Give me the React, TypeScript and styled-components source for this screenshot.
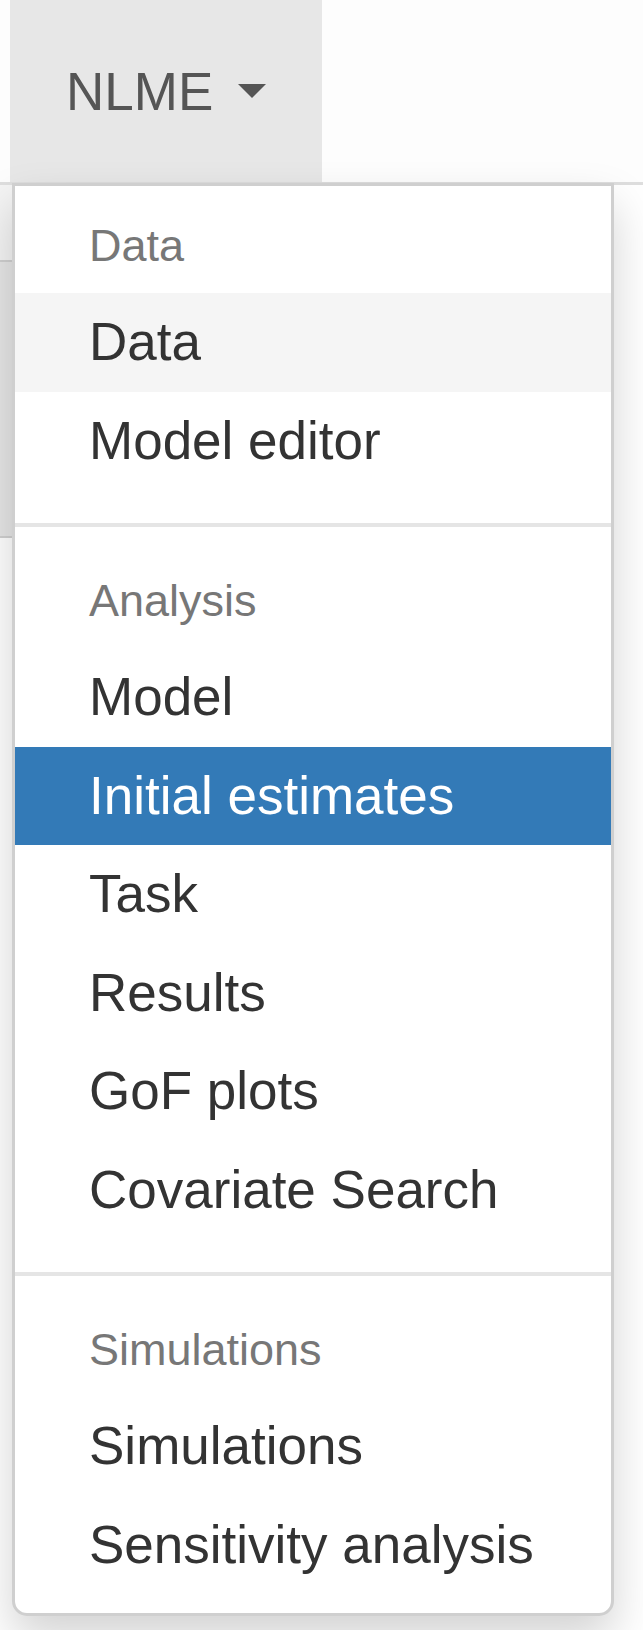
import styled, { createGlobalStyle } from "styled-components";

const GlobalStyle = createGlobalStyle`
  html, body {
    margin: 0;
    padding: 0;
    background: #ffffff;
    font-family: "Liberation Sans", Arial, Helvetica, sans-serif;
  }
`;

type Entry =
  | { kind: "header"; label: string }
  | { kind: "divider" }
  | { kind: "item"; label: string; state?: "hover" | "active" };

const entries: Entry[] = [
  { kind: "header", label: "Data" },
  { kind: "item", label: "Data", state: "hover" },
  { kind: "item", label: "Model editor" },
  { kind: "divider" },
  { kind: "header", label: "Analysis" },
  { kind: "item", label: "Model" },
  { kind: "item", label: "Initial estimates", state: "active" },
  { kind: "item", label: "Task" },
  { kind: "item", label: "Results" },
  { kind: "item", label: "GoF plots" },
  { kind: "item", label: "Covariate Search" },
  { kind: "divider" },
  { kind: "header", label: "Simulations" },
  { kind: "item", label: "Simulations" },
  { kind: "item", label: "Sensitivity analysis" },
];

const App: React.FC = () => {
  return (
    <Page>
      <GlobalStyle />
      <Navbar>
        <NavItem>
          <NavToggle>
            NLME <Caret />
          </NavToggle>
          <Menu>
            {entries.map((e, i) => {
              if (e.kind === "header") return <MenuHeader key={i}>{e.label}</MenuHeader>;
              if (e.kind === "divider") return <MenuDivider key={i} />;
              return (
                <MenuItem key={i} $state={e.state}>
                  {e.label}
                </MenuItem>
              );
            })}
          </Menu>
        </NavItem>
      </Navbar>
      <Content>
        <SidePanel>
          <TopStrip />
          <TabBar />
        </SidePanel>
      </Content>
    </Page>
  );
};

const Page = styled.div`
  width: 643px;
  min-height: 1630px;
  background: #ffffff;
`;

const Navbar = styled.div`
  display: flex;
  padding-left: 10px;
  height: 182px;
  background: #fdfdfd;
  border-bottom: 3px solid #dedede;
  position: relative;
  z-index: 2;
`;

const NavItem = styled.div`
  position: relative;
`;

const NavToggle = styled.div`
  display: flex;
  align-items: center;
  height: 182px;
  padding: 0 56px;
  background: #e7e7e7;
  color: #555555;
  font-size: 53px;
  white-space: pre;
`;

const Caret = styled.span`
  display: inline-block;
  margin-left: 10px;
  width: 0;
  height: 0;
  border-top: 14px solid #555555;
  border-left: 14px solid transparent;
  border-right: 14px solid transparent;
`;

const Menu = styled.div`
  position: absolute;
  top: 183px;
  left: 2px;
  width: 602px;
  box-sizing: border-box;
  padding: 19px 0;
  background: #ffffff;
  border: 3px solid #cfcfcf;
  border-radius: 0 0 15px 15px;
  box-shadow: 0 22px 45px rgba(0, 0, 0, 0.175);
`;

const MenuHeader = styled.div`
  padding: 9px 74px 15px;
  font-size: 45px;
  line-height: 64px;
  color: #777777;
`;

const MenuItem = styled.div<{ $state?: "hover" | "active" }>`
  padding: 12px 74px;
  font-size: 53px;
  line-height: 74.5px;
  white-space: nowrap;
  color: ${(p) => (p.$state === "active" ? "#ffffff" : "#333333")};
  background: ${(p) =>
    p.$state === "active" ? "#337ab7" : p.$state === "hover" ? "#f5f5f5" : "transparent"};
`;

const MenuDivider = styled.div`
  height: 4px;
  margin: 33px 0;
  background: #e5e5e5;
`;

const Content = styled.div`
  display: flex;
`;

const SidePanel = styled.div`
  display: flex;
  flex-direction: column;
  width: 60px;
`;

const TopStrip = styled.div`
  height: 75px;
  background: #f4f4f4;
`;

const TabBar = styled.div`
  height: 274px;
  background: #e6e6e6;
  border-top: 2px solid #d0d0d0;
  border-bottom: 2px solid #d0d0d0;
`;

export default App;
